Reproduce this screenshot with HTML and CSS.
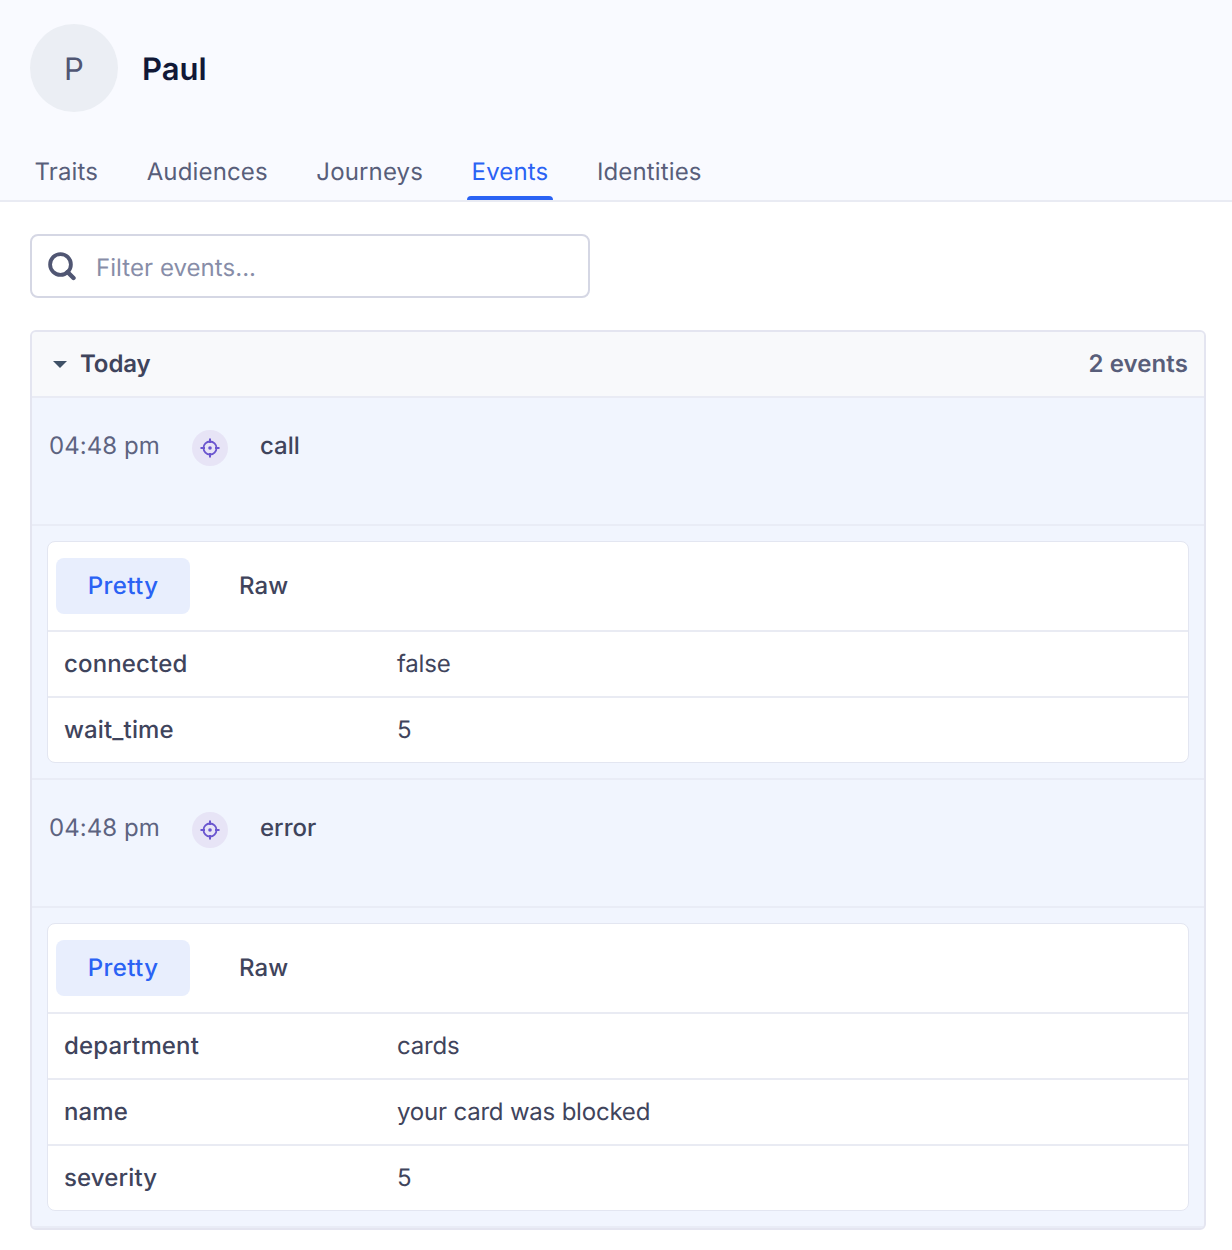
FILE: index.html
```html
<!DOCTYPE html>
<html lang="en">
<head>
<meta charset="utf-8">
<title>Paul</title>
<link rel="stylesheet" href="styles.css">
</head>
<body>
<header class="profile">
  <div class="identity">
    <div class="avatar"><span class="initial">P</span></div>
    <h1 class="name">Paul</h1>
  </div>
  <nav class="tabs">
    <a class="tab">Traits</a>
    <a class="tab">Audiences</a>
    <a class="tab">Journeys</a>
    <a class="tab active">Events</a>
    <a class="tab">Identities</a>
  </nav>
</header>
<main class="content">
  <div class="search">
    <svg class="search-icon" viewBox="0 0 30 30" width="30" height="30" fill="none" stroke="#505673" stroke-width="3.8" stroke-linecap="round"><circle cx="13.5" cy="13.5" r="10.4"/><path d="M20.5 21l6 6" stroke-width="4.4"/></svg>
    <span class="placeholder">Filter events...</span>
  </div>
  <section class="panel">
    <div class="panel-head">
      <div class="panel-title"><span class="caret"></span>Today</div>
      <div class="count">2 events</div>
    </div>
    <div class="event">
      <span class="time">04:48 pm</span>
      <span class="badge"><svg viewBox="0 0 20 20" width="20" height="20" fill="none" stroke="#6a55cf" stroke-width="1.8"><circle cx="10" cy="10" r="6.5"/><path d="M10 0.5v4.5M10 15v4.5M0.5 10h4.5M15 10h4.5" stroke-width="2"/><circle cx="10" cy="10" r="1.8" fill="#6a55cf" stroke="none"/></svg></span>
      <span class="event-name">call</span>
    </div>
    <div class="detail">
      <div class="card">
        <div class="switch"><span class="pill on">Pretty</span><span class="pill">Raw</span></div>
        <div class="row"><span class="key">connected</span><span class="val">false</span></div>
        <div class="row"><span class="key">wait_time</span><span class="val">5</span></div>
      </div>
    </div>
    <div class="event">
      <span class="time">04:48 pm</span>
      <span class="badge"><svg viewBox="0 0 20 20" width="20" height="20" fill="none" stroke="#6a55cf" stroke-width="1.8"><circle cx="10" cy="10" r="6.5"/><path d="M10 0.5v4.5M10 15v4.5M0.5 10h4.5M15 10h4.5" stroke-width="2"/><circle cx="10" cy="10" r="1.8" fill="#6a55cf" stroke="none"/></svg></span>
      <span class="event-name">error</span>
    </div>
    <div class="detail">
      <div class="card">
        <div class="switch"><span class="pill on">Pretty</span><span class="pill">Raw</span></div>
        <div class="row"><span class="key">department</span><span class="val">cards</span></div>
        <div class="row"><span class="key">name</span><span class="val">your card was blocked</span></div>
        <div class="row"><span class="key">severity</span><span class="val">5</span></div>
      </div>
    </div>
  </section>
</main>
</body>
</html>
```
FILE: styles.css
```css
* { box-sizing: border-box; }
html, body { margin: 0; background: #fff; }
body { font-family: Inter, "Liberation Sans", sans-serif; font-size: 24px; line-height: 32px; color: #3f445c; text-rendering: geometricPrecision; }

.profile { height: 202px; background: #f9faff; border-bottom: 2px solid #e9ebf3; display: flex; flex-direction: column; }
.identity { display: flex; align-items: center; padding: 24px 30px 0; gap: 24px; }
.avatar { width: 88px; height: 88px; border-radius: 50%; background: #ebeef4; color: #505673; display: flex; align-items: center; justify-content: center; }
.initial { padding-top: 4px; font-size: 31px; }
.name { margin: 0; padding-top: 4px; font-size: 31px; line-height: 40px; font-weight: 600; color: #111837; }

.tabs { display: flex; gap: 39.5px; padding: 0 30px; margin-top: auto; }
.tab { height: 48px; padding: 4px 4.5px 0; color: #585e7a; font-size: 24px; line-height: 32px; letter-spacing: 0.15px; position: relative; }
.tab.active { color: #2a62f4; }
.tab.active::after { content: ""; position: absolute; left: 0; right: 0; bottom: 0; height: 4px; background: #2a62f4; border-radius: 4px 4px 0 0; }

.content { padding: 32px 26px 0 30px; }
.search { width: 560px; height: 64px; border: 2px solid #d5d7e4; border-radius: 8px; display: flex; align-items: center; padding: 0 0 0 15px; gap: 19px; background: #fff; }
.search-icon { flex: none; }
.placeholder { color: #878da8; font-size: 24px; position: relative; top: 2px; letter-spacing: 0.05px; }

.panel { margin-top: 32px; border: 2px solid #e4e5f0; border-radius: 6px; background: #f1f5fe; overflow: hidden; }
.panel-head { height: 66px; background: #f8f9fb; border-bottom: 2px solid #e9ebf4; display: flex; align-items: center; justify-content: space-between; padding: 0 16px 0 21px; font-weight: 600; color: #3f445c; }
.panel-title { display: flex; align-items: center; gap: 13px; letter-spacing: -0.1px; }
.caret { width: 0; height: 0; border-left: 7px solid transparent; border-right: 7px solid transparent; border-top: 7px solid #3f5166; }
.count { color: #585e7a; letter-spacing: 0.1px; }

.event { height: 128px; border-bottom: 2px solid #e9ecf6; display: flex; align-items: flex-start; padding: 32px 0 0 17px; }
.time { width: 143px; color: #5d6380; letter-spacing: 0.05px; }
.badge { width: 36px; height: 36px; border-radius: 50%; background: #e7e4f6; display: flex; align-items: center; justify-content: center; }
.event-name { margin-left: 32px; font-weight: 500; color: #3f445c; }

.detail { padding: 15px; border-bottom: 2px solid #e9ecf6; }
.card { background: #fff; border: 1px solid #e3e6f1; border-radius: 8px; }
.switch { height: 88px; display: flex; align-items: center; padding: 0 0 0 8px; gap: 16px; }
.pill { width: 134px; height: 56px; border-radius: 8px; display: flex; align-items: center; justify-content: center; color: #3f445c; font-weight: 500; letter-spacing: 0.1px; }
.pill.on { background: #e8eefd; color: #2a62f4; letter-spacing: 0.4px; }
.pill:not(.on) { width: auto; padding: 0 33px; }
.row { height: 66px; border-top: 2px solid #e9ebf3; display: flex; align-items: center; padding-left: 16px; }
.key { width: 333px; font-weight: 500; color: #3f445c; letter-spacing: 0.15px; }
.val { color: #3f445c; letter-spacing: -0.2px; }
```
